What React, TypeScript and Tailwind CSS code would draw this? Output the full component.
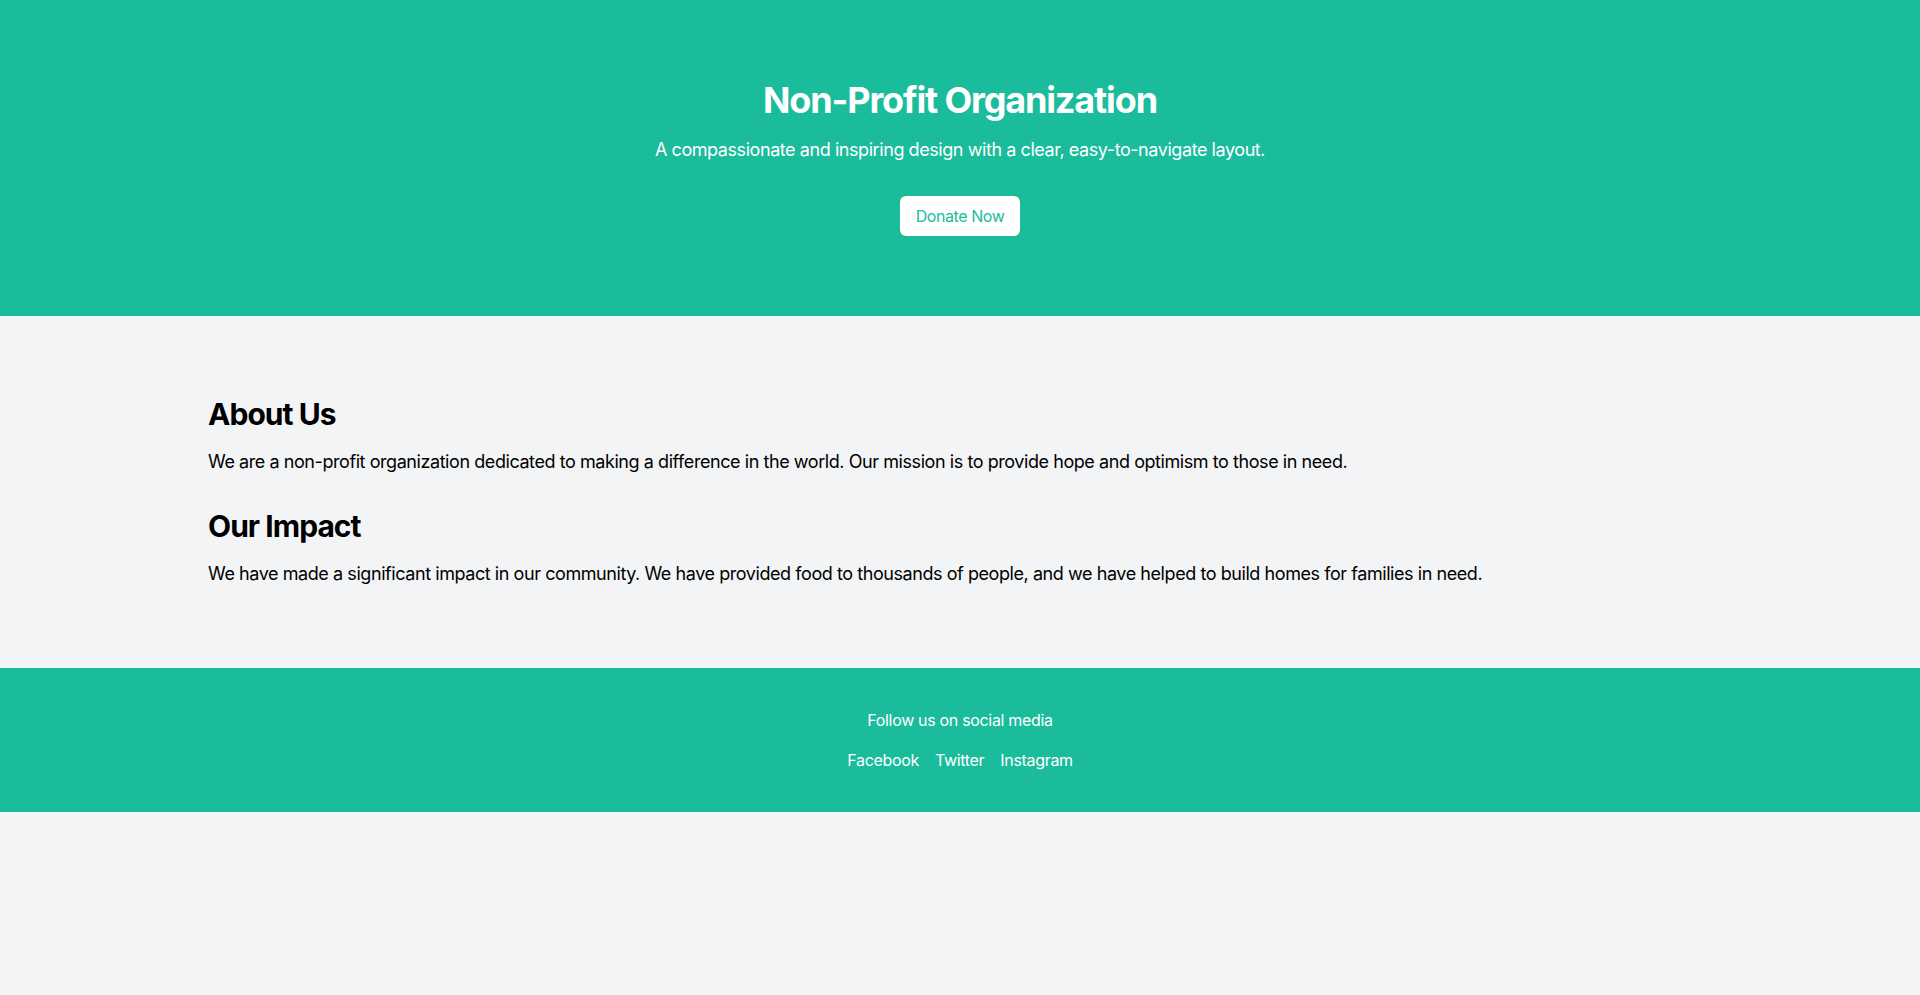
import React from 'react';

const sections = [
  {
    title: 'About Us',
    body: 'We are a non-profit organization dedicated to making a difference in the world. Our mission is to provide hope and optimism to those in need.',
  },
  {
    title: 'Our Impact',
    body: 'We have made a significant impact in our community. We have provided food to thousands of people, and we have helped to build homes for families in need.',
  },
];

const App: React.FC = () => {
  return (
    <div className="min-h-screen bg-[#f3f4f6] font-['Inter',sans-serif] tracking-[-0.027em]">
      <header className="bg-[#1abc9c] py-20 text-center text-white">
        <h1 className="mb-4 text-4xl font-bold tracking-[-0.032em]">Non-Profit Organization</h1>
        <p className="text-lg">A compassionate and inspiring design with a clear, easy-to-navigate layout.</p>
        <button className="mt-8 rounded-md bg-white px-4 py-2 text-base text-[#1abc9c]">Donate Now</button>
      </header>

      <main className="container mx-auto px-4 py-20 text-black">
        {sections.map((section, index) => (
          <section key={section.title} className={index < sections.length - 1 ? 'mb-8' : ''}>
            <h2 className="mb-4 text-3xl font-bold tracking-[-0.032em]">{section.title}</h2>
            <p className="text-lg">{section.body}</p>
          </section>
        ))}
      </main>

      <footer className="bg-[#1abc9c] py-10 text-center text-white tracking-[-0.02em]">
        <p>Follow us on social media</p>
        <div className="mt-4 flex justify-center gap-4">
          <a href="#">Facebook</a>
          <a href="#">Twitter</a>
          <a href="#">Instagram</a>
        </div>
      </footer>
    </div>
  );
};

export default App;
